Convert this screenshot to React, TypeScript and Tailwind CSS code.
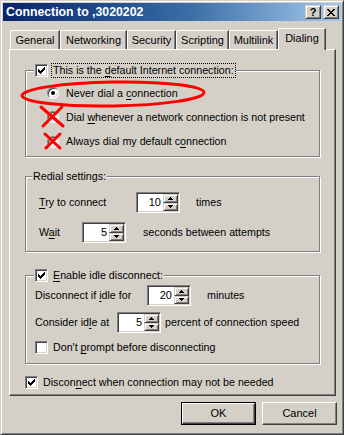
import type { ReactNode } from "react"

const raised =
  "border border-t-[#D4D0C8] border-l-[#D4D0C8] border-r-[#404040] border-b-[#404040] shadow-[inset_1px_1px_0_#fff,inset_-1px_-1px_0_#808080] bg-[#D4D0C8]"
const sunken =
  "border border-t-[#808080] border-l-[#808080] border-r-white border-b-white shadow-[inset_1px_1px_0_#404040,inset_-1px_-1px_0_#D4D0C8] bg-white"

function U({ children }: { children: ReactNode }) {
  return <span className="underline underline-offset-[2px]">{children}</span>
}

function Checkbox({ checked }: { checked?: boolean }) {
  return (
    <span className={`flex h-[13px] w-[13px] shrink-0 items-center justify-center ${sunken}`}>
      {checked && (
        <svg width="7" height="7" viewBox="0 0 7 7" shapeRendering="crispEdges">
          <path
            d="M6 0h1v1h-1z M5 1h2v1h-2z M0 2h1v1h-1z M4 2h3v1h-3z M0 3h2v1h-2z M3 3h3v1h-3z M0 4h5v1h-5z M1 5h3v1h-3z M2 6h1v1h-1z"
            fill="#000"
          />
        </svg>
      )}
    </span>
  )
}

function Radio({ checked }: { checked?: boolean }) {
  return (
    <span className="flex h-[12px] w-[12px] shrink-0 items-center justify-center rounded-full border border-t-[#808080] border-l-[#808080] border-r-white border-b-white bg-white shadow-[inset_1px_1px_0_#404040,inset_-1px_-1px_0_#D4D0C8]">
      {checked && <span className="h-[4px] w-[4px] rounded-full bg-black" />}
    </span>
  )
}

function SpinBtn({ up }: { up?: boolean }) {
  return (
    <span className={`flex flex-1 items-center justify-center ${raised}`}>
      <svg width="5" height="3" viewBox="0 0 5 3" shapeRendering="crispEdges">
        <path d={up ? "M2 0h1v1h1v1h1v1h-5v-1h1v-1h1z" : "M0 0h5v1h-1v1h-1v1h-1v-1h-1v-1h-1z"} fill="#000" />
      </svg>
    </span>
  )
}

function Spin({ value }: { value: string }) {
  return (
    <div className={`flex h-[21px] w-[44px] shrink-0 p-[1px] ${sunken}`}>
      <span className="flex-1 pr-[2px] text-right text-[11px] leading-[17px]">{value}</span>
      <div className="flex w-[15px] flex-col">
        <SpinBtn up />
        <SpinBtn />
      </div>
    </div>
  )
}

function Group({ legend, children, className }: { legend: ReactNode; children: ReactNode; className?: string }) {
  return (
    <fieldset
      className={`border border-[#808080] shadow-[1px_1px_0_#fff,inset_1px_1px_0_#fff] ${className ?? ""}`}
    >
      {legend}
      {children}
    </fieldset>
  )
}

const tabs = [
  { label: "General", w: "w-[50px]" },
  { label: "Networking", w: "w-[67px]" },
  { label: "Security", w: "w-[49px]" },
  { label: "Scripting", w: "w-[53px]" },
  { label: "Multilink", w: "w-[49px]" },
]

export default function App() {
  return (
    <div className="relative h-[435px] w-[344px] overflow-hidden border border-t-[#D4D0C8] border-l-[#D4D0C8] border-r-[#404040] border-b-[#404040] bg-[#D4D0C8] p-[2px] font-['Liberation_Sans',Arial,sans-serif] text-[10.7px] leading-[13px] text-black shadow-[inset_1px_1px_0_#fff,inset_-1px_-1px_0_#808080]">
      {/* title bar */}
      <div className="flex h-[18px] items-center justify-between bg-gradient-to-r from-[#0A246A] via-[#3A6EA5] via-55% to-[#A6CAF0] pl-[3px] pr-[2px]">
        <span className="text-[12.3px] font-bold text-white">Connection to ,3020202</span>
        <div className="flex gap-[2px]">
          <span className={`flex h-[14px] w-[16px] items-center justify-center text-[11px] font-bold leading-none ${raised}`}>?</span>
          <span className={`flex h-[14px] w-[16px] items-center justify-center ${raised}`}>
            <svg width="8" height="7" viewBox="0 0 8 7" shapeRendering="crispEdges">
              <path
                d="M0 0h2v1h-2z M6 0h2v1h-2z M1 1h2v1h-2z M5 1h2v1h-2z M2 2h4v1h-4z M3 3h2v1h-2z M2 4h4v1h-4z M1 5h2v1h-2z M5 5h2v1h-2z M0 6h2v1h-2z M6 6h2v1h-2z"
                fill="#000"
              />
            </svg>
          </span>
        </div>
      </div>

      {/* tabs */}
      <div className="ml-[7px] mt-[7px] flex h-[21px] items-end text-[11px]">
        {tabs.map((t) => (
          <div
            key={t.label}
            className={`flex h-[19px] ${t.w} items-center justify-center rounded-tl-[2px] border-l border-t border-r border-l-white border-t-white border-r-[#404040] shadow-[inset_-1px_0_0_#808080]`}
          >
            {t.label}
          </div>
        ))}
        <div className="relative z-10 -mb-[1px] flex h-[22px] w-[48px] items-start justify-center rounded-tl-[2px] border-l border-t border-r border-l-white border-t-white border-r-[#404040] bg-[#D4D0C8] pt-[3px] shadow-[inset_-1px_0_0_#808080]">
          Dialing
        </div>
      </div>

      {/* page */}
      <div className="ml-[6px] mr-[5px] h-[347px] border border-l-white border-t-white border-r-[#404040] border-b-[#404040] px-[15px] pt-[13px] shadow-[inset_-1px_-1px_0_#808080]">
        <Group
          legend={
            <legend className="ml-[8px] flex h-[15px] items-center bg-[#D4D0C8] px-[1px]">
              <Checkbox checked />
              <span className="ml-[4px] px-[1px] leading-[13px] outline outline-1 outline-dotted outline-black">
                This is the <U>d</U>efault Internet connection:
              </span>
            </legend>
          }
          className="pb-[2px]"
        >
          <div className="flex flex-col pl-[21px] pt-[3px]">
            <div className="flex h-[24px] items-center gap-[7px]">
              <Radio checked />
              <span>
                Never dial a <U>c</U>onnection
              </span>
            </div>
            <div className="flex h-[24px] items-center gap-[7px]">
              <Radio />
              <span>
                Dial <U>w</U>henever a network connection is not present
              </span>
            </div>
            <div className="flex h-[25px] items-center gap-[7px]">
              <Radio />
              <span>
                Always dial my default c<U>o</U>nnection
              </span>
            </div>
          </div>
        </Group>

        <Group
          legend={<legend className="ml-[6px] h-[13px] bg-[#D4D0C8] px-[1px]">Redial settings:</legend>}
          className="mt-[13px] pb-[8px]"
        >
          <div className="flex flex-col pl-[13px] pt-[9px]">
            <div className="flex items-center">
              <span className="w-[97px]">
                <U>T</U>ry to connect
              </span>
              <Spin value="10" />
              <span className="ml-[16px]">times</span>
            </div>
            <div className="mt-[9px] flex items-center">
              <span className="w-[43px]">
                W<U>a</U>it
              </span>
              <Spin value="5" />
              <span className="ml-[17px]">seconds between attempts</span>
            </div>
          </div>
        </Group>

        <Group
          legend={
            <legend className="ml-[8px] flex h-[13px] items-center bg-[#D4D0C8] px-[1px]">
              <Checkbox checked />
              <span className="ml-[5px]">
                <U>E</U>nable idle disconnect:
              </span>
            </legend>
          }
          className="mt-[17px] pb-[9px]"
        >
          <div className="flex flex-col pl-[9px] pt-[3px]">
            <div className="flex items-center">
              <span className="w-[112px]">
                Disconnect if <U>i</U>dle for
              </span>
              <Spin value="20" />
              <span className="ml-[16px]">minutes</span>
            </div>
            <div className="mt-[6px] flex items-center">
              <span className="w-[82px]">
                Consider id<U>l</U>e at
              </span>
              <Spin value="5" />
              <span className="ml-[4px]">percent of connection speed</span>
            </div>
            <div className="mt-[8px] flex items-center">
              <Checkbox />
              <span className="ml-[5px]">
                Don't <U>p</U>rompt before disconnecting
              </span>
            </div>
          </div>
        </Group>

        <div className="mt-[12px] flex items-center">
          <Checkbox checked />
          <span className="ml-[5px]">
            Discon<U>n</U>ect when connection may not be needed
          </span>
        </div>
      </div>

      {/* buttons */}
      <div className="mr-[4px] mt-[6px] flex justify-end gap-[6px] text-[11px]">
        <div className="h-[23px] w-[75px] border border-black">
          <div className="flex h-full w-full items-center justify-center border border-t-white border-l-white border-r-[#404040] border-b-[#404040] shadow-[inset_-1px_-1px_0_#808080]">
            OK
          </div>
        </div>
        <div className="flex h-[23px] w-[75px] items-center justify-center border border-t-white border-l-white border-r-[#404040] border-b-[#404040] shadow-[inset_-1px_-1px_0_#808080]">
          Cancel
        </div>
      </div>

      {/* red annotations */}
      <svg className="pointer-events-none absolute left-0 top-0" width="344" height="435" viewBox="0 0 344 435">
        <ellipse cx="112" cy="93" rx="91" ry="12" fill="none" stroke="#FF0000" strokeWidth="3" transform="rotate(-1 112 93)" />
        <g stroke="#FF0000" strokeWidth="3" strokeLinecap="round">
          <line x1="40" y1="106" x2="62" y2="125" />
          <line x1="61" y1="106" x2="42" y2="125" />
          <line x1="44" y1="133" x2="59" y2="147" />
          <line x1="59" y1="133" x2="45" y2="147" />
        </g>
      </svg>
    </div>
  )
}
